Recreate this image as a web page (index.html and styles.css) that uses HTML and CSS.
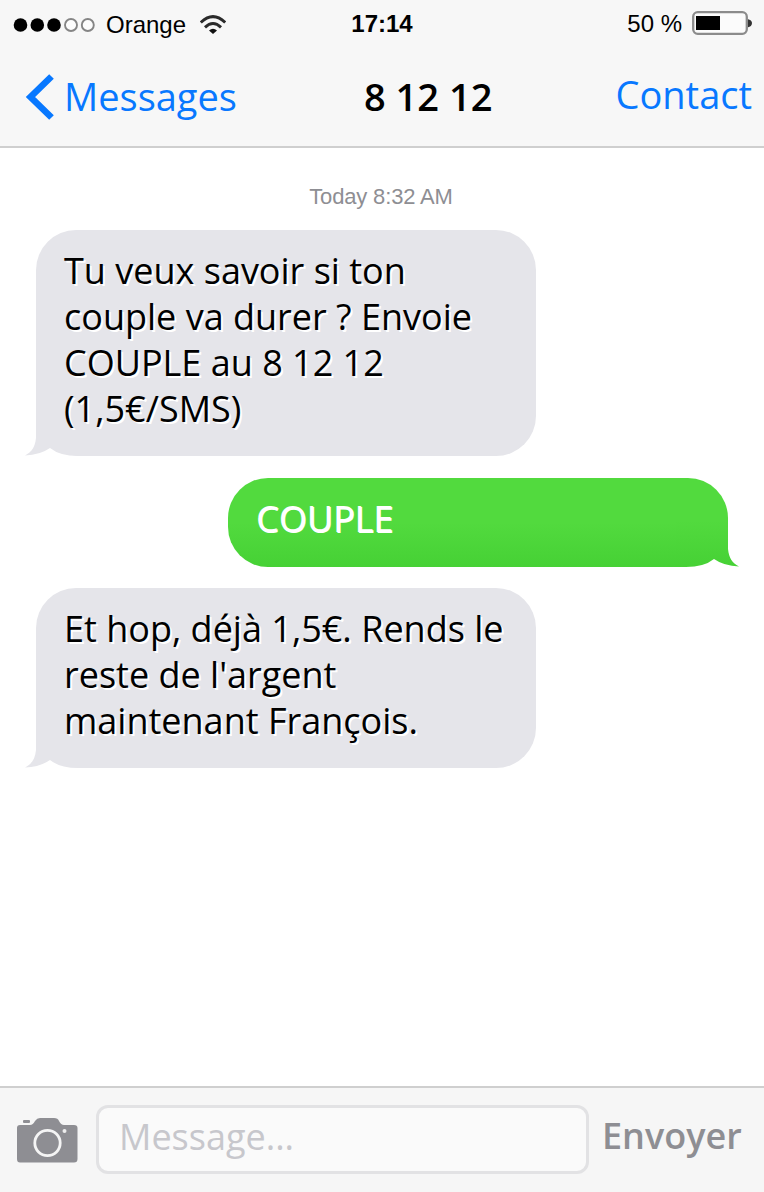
FILE: index.html
```html
<!DOCTYPE html>
<html lang="fr">
<head>
<meta charset="utf-8">
<title>Messages</title>
<link rel="stylesheet" href="styles.css">
</head>
<body>
<div class="phone">
  <header class="header">
    <div class="status">
      <div class="carrier">
        <svg class="signal" width="83" height="16" viewBox="0 0 83 16"><g fill="#000"><circle cx="7.5" cy="9" r="6.8"/><circle cx="24.3" cy="9" r="6.8"/><circle cx="41" cy="9" r="6.8"/></g><g fill="#fcfcfc" stroke="#858585" stroke-width="1.9"><circle cx="58" cy="9" r="6"/><circle cx="74.8" cy="9" r="6"/></g></svg>
        <span class="operator">Orange</span>
        <svg class="wifi" width="26" height="20" viewBox="0 0 26 20"><g fill="none" stroke="#2a2a2a" stroke-width="2.9"><path d="M.8 8.500Q13-3.200 25.200 8.500"/><path d="M5 13.400Q13 5.600 21 13.400"/></g><path d="M9 16.500Q13 13 17 16.500L13 20Z" fill="#111"/></svg>
      </div>
      <div class="clock">17:14</div>
      <div class="power">
        <span class="percent">50 %</span>
        <svg class="battery" width="61" height="26" viewBox="0 0 61 26"><path d="M55.5 8Q60 9 60 12Q60 15.500 55.500 16.500Z" fill="#333"/><rect x="1.200" y="1.200" width="53.600" height="21.600" rx="4.500" fill="#fbfbfb" stroke="#8b8b8b" stroke-width="2.300"/><path d="M4 5h24v14H4z" fill="#000"/></svg>
      </div>
    </div>
    <nav class="nav">
      <div class="back">
        <svg class="chevron" width="29" height="46" viewBox="0 0 29 46"><path d="M26.500 2.500L5.500 23L26.500 43.500" fill="none" stroke="#0878ff" stroke-width="6.600"/></svg>
        <span class="back-label">Messages</span>
      </div>
      <div class="title">8 12 12</div>
      <div class="contact">Contact</div>
    </nav>
  </header>
  <main class="thread">
    <div class="date">Today 8:32 AM</div>
    <div class="bubble received">Tu veux savoir si ton<br>couple va durer ? Envoie<br>COUPLE au 8 12 12<br>(1,5€/SMS)
      <svg class="tail" width="64" height="46" viewBox="0 0 64 46"><path d="M0 0H12V36C12 40 8 43 1 45.500Q15 45 27 37Q36 46 64 46H0Z" fill="#fff"/><path d="M12 0V28C11 37 8 42 1 45.500Q16 45 26 38Q36 46 54 46H64V0Z" fill="#e5e5ea"/></svg>
    </div>
    <div class="bubble sent">COUPLE
      <svg class="tail" width="64" height="46" viewBox="0 0 64 46"><defs><linearGradient id="green" x1="0" x2="0" y1="0" y2="1"><stop stop-color="#52da3e"/><stop offset="1" stop-color="#46d135"/></linearGradient></defs><path d="M52 0H64V46H8V38H52Z" fill="#fff"/><path d="M52 0V28C53 37 56 42 63 45.500Q48 45 38 38Q28 46 10 46H0V0Z" fill="url(#green)"/></svg>
    </div>
    <div class="bubble received">Et hop, déjà 1,5€. Rends le<br>reste de l'argent<br>maintenant François.
      <svg class="tail" width="64" height="46" viewBox="0 0 64 46"><path d="M0 0H12V36C12 40 8 43 1 45.500Q15 45 27 37Q36 46 64 46H0Z" fill="#fff"/><path d="M12 0V28C11 37 8 42 1 45.500Q16 45 26 38Q36 46 54 46H64V0Z" fill="#e5e5ea"/></svg>
    </div>
  </main>
  <footer class="composer">
    <svg class="camera" width="62" height="47" viewBox="0 0 62 47"><path d="M4 8H14Q17 8 19 4Q21 1 24 1H38Q42 1 43 4Q45 8 48 8H58Q61.500 8 61.500 11V42Q61.500 45.500 58 45.500H4Q1 45.500 1 42V11Q1 8 4 8Z" fill="#8e8e93"/><rect x="7" y="3" width="7" height="3" rx="1" fill="#8e8e93"/><circle cx="31.500" cy="26" r="12.700" fill="none" stroke="#f5f5f5" stroke-width="2.800"/><circle cx="48.500" cy="14" r="2" fill="#eee"/></svg>
    <div class="field"><span class="placeholder">Message...</span></div>
    <div class="send">Envoyer</div>
  </footer>
</div>
</body>
</html>
```
FILE: styles.css
```css
body { margin: 0; background: #fff; font-family: "Open Sans", sans-serif; }
.phone { width: 764px; height: 1192px; display: flex; flex-direction: column; overflow: hidden; background: #fff; }
.header { height: 148px; box-sizing: border-box; background: #f7f7f7; border-bottom: 2px solid #cfcfcf; color: #000; }
.status { height: 48px; display: grid; grid-template-columns: 1fr auto 1fr; align-items: center; font: 24px/28px "Liberation Sans", Arial, sans-serif; }
.carrier { display: flex; align-items: center; padding-left: 13px; }
.operator { margin-left: 10px; padding-top: 2px; }
.wifi { margin-left: 14px; }
.clock { font-weight: bold; }
.power { display: flex; align-items: center; justify-content: flex-end; padding-right: 11px; }
.battery { margin-left: 10px; }
.nav { height: 98px; display: grid; grid-template-columns: 364px 1fr auto; align-items: center; font-size: 38px; line-height: 52px; color: #0878ff; white-space: nowrap; }
.back { display: flex; align-items: center; padding-left: 25px; }
.back-label { margin-left: 10px; padding-bottom: 2px; }
.title { color: #000; font-weight: 600; padding-bottom: 2px; }
.contact { padding-right: 12px; padding-bottom: 6px; }
.thread { flex: 1; display: flex; flex-direction: column; align-items: flex-start; padding: 35px 36px 0; }
.date { align-self: center; font: 22px/28px "Liberation Sans", Arial, sans-serif; letter-spacing: -0.15px; color: #8e8e93; margin: 0 2px 19px 0; }
.bubble { position: relative; isolation: isolate; box-sizing: border-box; width: 500px; padding: 18px 28px 24px; border-radius: 40px; font-size: 36px; line-height: 46px; white-space: nowrap; color: #000; }
.received { background: #e5e5ea; text-shadow: 2px 2px 0 #fff; }
.sent { align-self: flex-end; margin: 22px 0 21px; padding-bottom: 25px; background: linear-gradient(#52da3e 50%, #46d135); color: #fff; text-shadow: 1px 1px 0 #fff; }
.tail { position: absolute; bottom: 0; left: -12px; z-index: -1; }
.sent .tail { left: auto; right: -12px; }
.composer { height: 106px; box-sizing: border-box; border-top: 2px solid #cfcfcf; background: #f6f6f6; display: flex; align-items: center; padding-left: 16px; }
.field { box-sizing: border-box; width: 493px; height: 69px; margin: -1px 0 0 18px; border: 3px solid #e2e2e4; border-radius: 12px; background: #fafafa; padding-left: 20px; font-size: 36px; line-height: 57px; color: #c7c7cc; }
.send { margin-left: 13px; margin-top: -10px; font-size: 36px; font-weight: 600; color: #8e8e93; }
```
